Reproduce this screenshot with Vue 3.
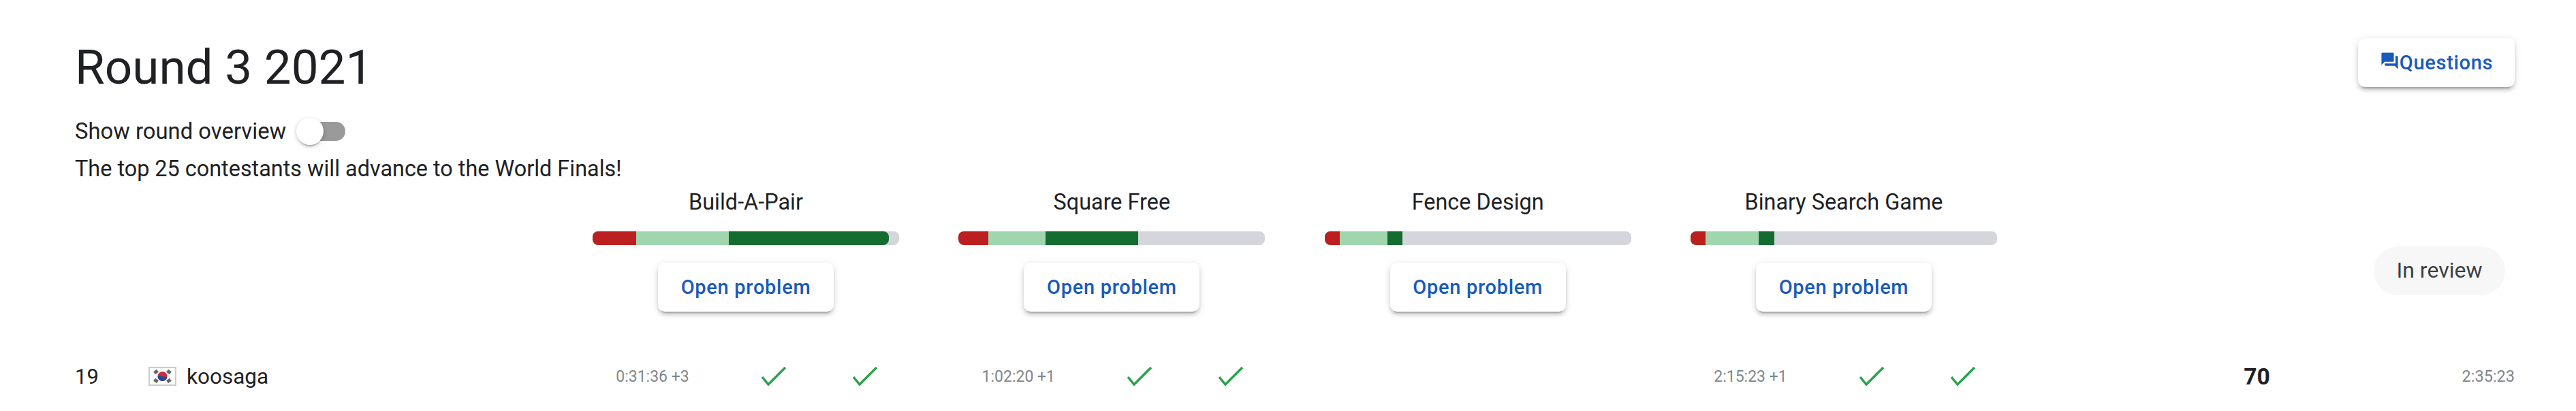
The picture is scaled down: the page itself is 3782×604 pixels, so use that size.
<template>
  <div class="page">
    <header class="top">
      <h1 class="title">Round 3 2021</h1>
      <button class="raised questions">
        <svg class="q-icon" viewBox="0 0 24 24"><path d="M21 6h-2v9H6v2c0 .55.45 1 1 1h11l4 4V7c0-.55-.45-1-1-1zm-4 6V3c0-.55-.45-1-1-1H3c-.55 0-1 .45-1 1v14l4-4h10c.55 0 1-.45 1-1z" /></svg>
        <span>Questions</span>
      </button>
    </header>

    <div class="overview">
      <span>Show round overview</span>
      <span class="toggle"><span class="knob"></span></span>
    </div>
    <p class="note">The top 25 contestants will advance to the World Finals!</p>

    <!-- problem heads, same columns as the score rows -->
    <div class="grid heads">
      <div v-for="p in problems" :key="p.name" class="head">
        <div class="name">{{ p.name }}</div>
        <div class="bar">
          <span class="seg red" :style="{ width: p.red + 'px' }"></span>
          <span class="seg light" :style="{ width: p.light + 'px' }"></span>
          <span class="seg dark" :class="{ 'seg-end': p.full }" :style="{ width: p.dark + 'px' }"></span>
        </div>
        <button class="raised open">Open problem</button>
      </div>
      <div class="side">
        <span class="chip">In review</span>
      </div>
    </div>

    <div class="grid row">
      <div class="who">
        <span class="rank">19</span>
        <svg class="flag" viewBox="0 0 41 28">
          <rect x="1" y="1" width="39" height="26" fill="#fff" stroke="#ccc" stroke-width="2" />
          <g fill="#666">
            <rect x="8" y="5" width="6" height="5" transform="rotate(-35 11 7.5)" />
            <rect x="27" y="5" width="6" height="5" transform="rotate(35 30 7.5)" />
            <rect x="8" y="18" width="6" height="5" transform="rotate(35 11 20.5)" />
            <rect x="27" y="18" width="6" height="5" transform="rotate(-35 30 20.5)" />
          </g>
          <circle cx="20.5" cy="14" r="7" fill="#cd2e3a" />
          <path d="M13.500 14a7 7 0 0 0 14 0c-2 2-4.500 1-7 0s-5-2-7 0z" fill="#1d4c9c" />
        </svg>
        <span class="handle">koosaga</span>
      </div>
      <div v-for="p in problems" :key="p.name" class="cell">
        <template v-if="p.time">
          <span class="time">{{ p.time }}</span>
          <span class="check-box" v-for="n in 2" :key="n">
            <svg class="check" viewBox="0 0 36 28"><path d="M1 15 L10 26 L35 1" /></svg>
          </span>
        </template>
      </div>
      <div class="totals">
        <span class="score">70</span>
        <span class="penalty">2:35:23</span>
      </div>
    </div>
  </div>
</template>

<script setup>
const problems = [
  { name: 'Build-A-Pair', red: 64, light: 136, dark: 235, full: true, time: '0:31:36 +3' },
  { name: 'Square Free', red: 44, light: 84, dark: 136, time: '1:02:20 +1' },
  { name: 'Fence Design', red: 22, light: 70, dark: 22, time: '' },
  { name: 'Binary Search Game', red: 22, light: 78, dark: 23, time: '2:15:23 +1' },
]
</script>

<style>
html,
body {
  margin: 0;
  background: #fff;
}
</style>

<style scoped>
.page {
  box-sizing: border-box;
  width: 3782px;
  height: 604px;
  padding: 50px 90px 0 110px;
  overflow: hidden;
  font-family: Roboto, sans-serif;
  font-size: 32.4px;
  color: #202124;
}

.top {
  display: flex;
  justify-content: space-between;
  align-items: flex-start;
}
.title {
  margin: 0;
  font-size: 71px;
  line-height: 98px;
  font-weight: 400;
}

.raised {
  display: flex;
  align-items: center;
  justify-content: center;
  height: 72px;
  padding: 0;
  border: none;
  border-radius: 10px;
  background: #fff;
  color: #185abc;
  font-family: Roboto, sans-serif;
  font-size: 29px;
  font-weight: 500;
  letter-spacing: 0.7px;
  box-shadow: 0 7px 2px -5px rgba(0, 0, 0, 0.2), 0 5px 5px 0 rgba(0, 0, 0, 0.14), 0 2px 12px 0 rgba(0, 0, 0, 0.12);
}
.questions {
  width: 230px;
  margin-top: 6px;
}
.q-icon {
  width: 29px;
  height: 29px;
  margin-top: -6px;
  fill: #185abc;
}

.overview {
  display: flex;
  align-items: center;
  height: 40px;
  margin-top: 25px;
  font-size: 32.8px;
}
.toggle {
  position: relative;
  width: 62px;
  height: 28px;
  margin-left: 25px;
  border-radius: 14px;
  background: #9a9a9a;
}
.knob {
  position: absolute;
  left: -10px;
  top: -6px;
  width: 40px;
  height: 40px;
  border-radius: 50%;
  background: #fff;
  box-shadow: 0 5px 2px -3px rgba(0, 0, 0, 0.2), 0 2px 5px 0 rgba(0, 0, 0, 0.14), 0 2px 7px 0 rgba(0, 0, 0, 0.12);
}
.note {
  margin: 15px 0 0;
  line-height: 40px;
}

.grid {
  display: grid;
  grid-template-columns: 760px repeat(4, 537.33px) 1fr;
}
.heads {
  margin-top: 9px;
}
.head {
  display: flex;
  flex-direction: column;
  align-items: center;
  width: 450px;
}
.head:first-child {
  grid-column: 2;
}
.name {
  line-height: 40px;
}
.bar {
  display: flex;
  width: 100%;
  height: 20px;
  margin-top: 23px;
  border-radius: 8px;
  background: #d5d6db;
  overflow: hidden;
}
.seg {
  display: block;
  height: 100%;
}
.red {
  background: #bc1f1f;
}
.light {
  background: #a0d6ad;
}
.dark {
  background: #146c2e;
}
.seg-end {
  border-radius: 0 8px 8px 0;
}
.open {
  width: 258px;
  margin-top: 26px;
}
.side {
  display: flex;
  justify-content: flex-end;
  padding: 85px 14px 0 0;
}
.chip {
  display: flex;
  align-items: center;
  justify-content: center;
  width: 193px;
  height: 72px;
  padding-bottom: 3px;
  box-sizing: border-box;
  border-radius: 36px;
  background: #f7f7f7;
  color: #3c4043;
  font-size: 32px;
}

.row {
  align-items: center;
  height: 60px;
  margin-top: 65px;
}
.who {
  display: flex;
  align-items: center;
}
.rank {
  width: 108px;
  font-size: 31px;
}
.flag {
  width: 41px;
  height: 28px;
}
.handle {
  margin-left: 15px;
  font-size: 31.5px;
}
.cell {
  display: flex;
  align-items: center;
}
.time {
  width: 176px;
  margin-right: 23px;
  text-align: center;
  font-size: 23px;
  color: #80868b;
}
.check-box {
  display: flex;
  justify-content: center;
  width: 134px;
}
.check {
  width: 36px;
  height: 28px;
  fill: none;
  stroke: #2ba24c;
  stroke-width: 3.5;
}
.totals {
  display: flex;
  align-items: center;
  justify-content: space-between;
  padding-left: 275px;
}
.score {
  font-size: 33.6px;
  font-weight: 700;
}
.penalty {
  font-size: 23.5px;
  color: #80868b;
}
</style>
